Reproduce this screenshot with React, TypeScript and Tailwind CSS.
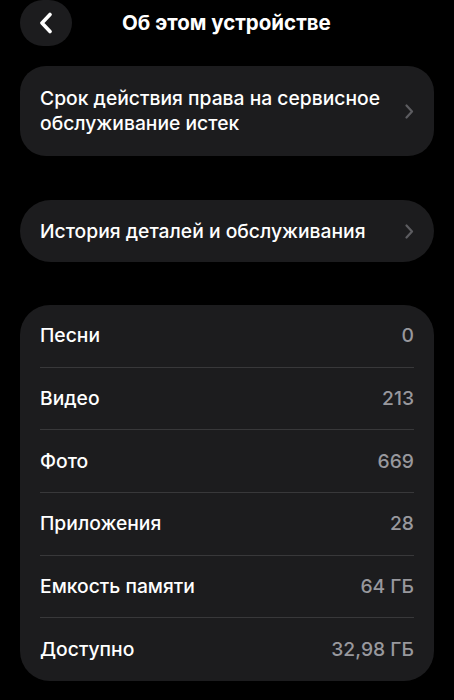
import React from "react";

const stats = [
  { label: "Песни", value: "0" },
  { label: "Видео", value: "213" },
  { label: "Фото", value: "669" },
  { label: "Приложения", value: "28" },
  { label: "Емкость памяти", value: "64 ГБ" },
  { label: "Доступно", value: "32,98 ГБ" },
];

function Chevron() {
  return (
    <svg width="9" height="15" viewBox="0 0 9 15" fill="none">
      <path
        d="M1.5 1.5L7 7.5L1.5 13.5"
        stroke="#5c5c60"
        strokeWidth="2.2"
        strokeLinecap="round"
        strokeLinejoin="round"
      />
    </svg>
  );
}

export default function App() {
  return (
    <div
      className="w-[454px] h-[700px] bg-black text-white overflow-hidden"
      style={{ fontFamily: "Inter, 'Noto Sans', sans-serif" }}
    >
      <header className="flex items-center h-[46px] px-5">
        <button className="w-[52px] h-[46px] rounded-full bg-[#1c1c1e] flex items-center justify-center">
          <svg width="14" height="22" viewBox="0 0 14 22" fill="none">
            <path
              d="M11 2.5L3 11L11 19.5"
              stroke="white"
              strokeWidth="3.6"
              strokeLinecap="round"
              strokeLinejoin="round"
            />
          </svg>
        </button>
        <h1 className="ml-[50px] text-[20.5px] font-bold">
          Об этом устройстве
        </h1>
      </header>

      <div className="px-5 pt-5 flex flex-col">
        <div className="h-[90px] rounded-[26px] bg-[#1c1c1e] flex items-center justify-between pl-5 pr-[20px]">
          <p className="text-[19.3px] font-medium leading-[25px]">
            Срок действия права на сервисное
            <br />
            обслуживание истек
          </p>
          <Chevron />
        </div>

        <div className="mt-[44px] h-[62px] rounded-[31px] bg-[#1c1c1e] flex items-center justify-between pl-5 pr-[20px]">
          <p className="text-[19.3px] font-medium">
            История деталей и обслуживания
          </p>
          <Chevron />
        </div>

        <div className="mt-[43px] rounded-[30px] bg-[#1c1c1e] px-5">
          {stats.map((s, i) => (
            <div
              key={s.label}
              className={
                "h-[62.7px] flex items-center justify-between" +
                (i < stats.length - 1 ? " border-b border-[#38383a]" : "")
              }
            >
              <span className="text-[19.3px] font-medium">{s.label}</span>
              <span className="text-[19.3px] font-medium text-[#98989d]">
                {s.value}
              </span>
            </div>
          ))}
        </div>
      </div>
    </div>
  );
}
